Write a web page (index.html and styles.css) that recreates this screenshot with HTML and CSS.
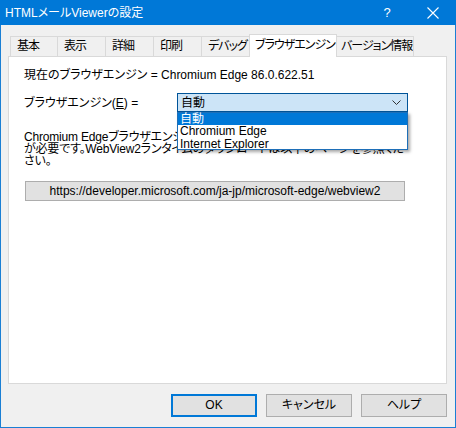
FILE: index.html
```html
<!DOCTYPE html>
<html lang="ja">
<head>
<meta charset="utf-8">
<title>HTMLメールViewerの設定</title>
<link rel="stylesheet" href="styles.css">
</head>
<body>
<div class="window">
  <div class="titlebar">
    <span class="title">HTMLメールViewerの設定</span>
    <span class="tb-btn help">?</span>
    <span class="tb-btn close">
      <svg width="12" height="12" viewBox="0 0 12 12"><path d="M0.5 0.5 L11.5 11.5 M11.5 0.5 L0.5 11.5" stroke="#fff" stroke-width="1.1" fill="none"/></svg>
    </span>
  </div>
  <div class="body">
    <div class="tabs">
      <div class="tab w47">基本</div>
      <div class="tab">表示</div>
      <div class="tab">詳細</div>
      <div class="tab">印刷</div>
      <div class="tab">デバッグ</div>
      <div class="tab selected">ブラウザエンジン</div>
      <div class="tab w77">バージョン情報</div>
    </div>
    <div class="panel">
      <div class="line">現在のブラウザエンジン = Chromium Edge 86.0.622.51</div>
      <div class="row">
        <span class="label">ブラウザエンジン(<u>E</u>) =</span>
        <div class="combo">
          <span class="combo-text">自動</span>
          <svg class="chev" width="9" height="5" viewBox="0 0 9 5"><path d="M0.5 0.5 L4.5 4.5 L8.5 0.5" stroke="#333" stroke-width="1" fill="none"/></svg>
          <div class="list">
            <div class="item sel">自動</div>
            <div class="item">Chromium Edge</div>
            <div class="item">Internet Explorer</div>
          </div>
        </div>
      </div>
      <p class="para">Chromium Edgeブラウザエンジンを使用するにはWebView2ランタイム<br>が必要です。WebView2ランタイムのダウンロードは以下のページを参照くだ<br>さい。</p>
      <div class="url">https://developer.microsoft.com/ja-jp/microsoft-edge/webview2</div>
    </div>
    <div class="buttons">
      <div class="btn default">OK</div>
      <div class="btn">キャンセル</div>
      <div class="btn">ヘルプ</div>
    </div>
  </div>
</div>
</body>
</html>
```
FILE: styles.css
```css
* { box-sizing: border-box; }
html, body { margin: 0; padding: 0; }
body {
  font-family: "Liberation Sans", "Noto Sans CJK JP", sans-serif;
  font-size: 12px;
  font-feature-settings: "palt" 1;
  font-variant-east-asian: proportional-width;
  color: #000;
  background: #f0f0f0;
}
.window {
  width: 456px;
  height: 428px;
  border: 1px solid #1a7fd4;
  border-top: none;
  background: #f0f0f0;
  display: flex;
  flex-direction: column;
}
.titlebar {
  height: 25px;
  margin: 0 -1px;
  background: #0078d7;
  color: #fff;
  display: flex;
  align-items: center;
}
.title {
  flex: 1;
  padding-left: 5px;
  font-size: 12px;
  line-height: 16px;
  margin-top: 1px;
}
.tb-btn {
  width: 46px;
  height: 25px;
  display: flex;
  align-items: center;
  justify-content: center;
}
.help { font-size: 13px; }
.body {
  flex: 1;
  display: flex;
  flex-direction: column;
  padding: 9px 8px 0 7px;
}
.tabs {
  display: flex;
  align-items: flex-end;
  padding-left: 2px;
  height: 22px;
  position: relative;
  z-index: 2;
}
.tab {
  width: 49px;
  height: 20px;
  border: 1px solid #d9d9d9;
  border-bottom: none;
  margin-left: -1px;
  background: #f0f0f0;
  padding-left: 6px;
  line-height: 18px;
  white-space: nowrap;
  overflow: hidden;
  letter-spacing: -1px;
}
.tab.w47 { width: 48px; margin-left: 0; }
.tab.w77 { width: 78px; padding-left: 4px; }
.tab.selected {
  width: 88px;
  height: 23px;
  background: #fff;
  margin-bottom: -1px;
  padding-left: 5px;
  line-height: 20px;
}
.panel {
  height: 328px;
  background: #fff;
  border: 1px solid #d9d9d9;
  padding: 11px 15px 0 15px;
  position: relative;
  z-index: 1;
}
.line { line-height: 14px; height: 14px; white-space: nowrap; }
.row {
  margin-top: 11px;
  display: flex;
  align-items: center;
  height: 19px;
}
.label { width: 153px; line-height: 14px; }
.label u { text-decoration: underline; }
.combo {
  width: 231px;
  height: 19px;
  background: #cce4f7;
  border: 1px solid #005499;
  position: relative;
  display: flex;
  align-items: center;
  padding-left: 3px;
}
.combo-text { flex: 1; line-height: 14px; }
.chev { margin-right: 6px; }
.list {
  position: absolute;
  left: -1px;
  top: 18px;
  width: 231px;
  height: 38px;
  background: #fff;
  border: 1px solid #1e6fb8;
  box-shadow: 2px 2px 3px rgba(0, 0, 0, 0.35);
  z-index: 5;
}
.item { height: 12px; line-height: 12px; padding-left: 2px; white-space: nowrap; }
.item + .item { height: 12.5px; }
.item.sel { background: #0078d7; color: #fff; }
.para {
  margin: 19px 0 0 0;
  line-height: 12px;
  white-space: nowrap;
  letter-spacing: -0.2px;
}
.url {
  margin: 14px 0 0 1px;
  width: 380px;
  height: 20px;
  background: #e1e1e1;
  border: 1px solid #adadad;
  text-align: center;
  line-height: 18px;
}
.buttons {
  display: flex;
  justify-content: flex-end;
  gap: 9px;
  margin-top: 10px;
}
.btn {
  width: 86px;
  height: 23px;
  background: #e1e1e1;
  border: 1px solid #adadad;
  text-align: center;
  line-height: 21px;
}
.btn.default { border: 2px solid #0078d7; line-height: 19px; }
```
